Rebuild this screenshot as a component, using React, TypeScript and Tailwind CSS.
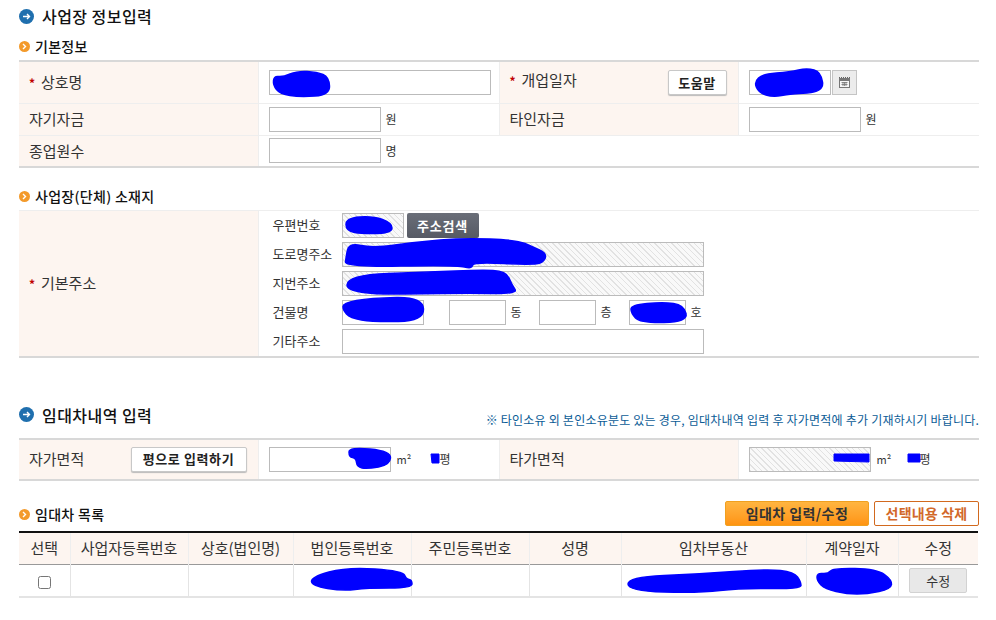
import React from "react";

const font = "font-['Noto_Sans_CJK_KR','Noto_Sans',sans-serif]";
const hatch =
  "bg-[repeating-linear-gradient(45deg,#e2e2e2_0,#e2e2e2_1px,#f9f9f9_1px,#f9f9f9_4px)]";

const scribbles: string[] = [
  "274,76 283,77 297,71 317,72 329,77 330,95 300,97 280,94 273,85",
  "754,82 763,74 790,72 807,68 821,72 824,92 790,94 773,97 759,93",
  "346,218 373,216 392,223 392,233 363,234 346,231",
  "349,243 373,248 417,242 463,238 517,240 533,247 546,253 545,261 535,265 473,262 472,269 457,265 345,267 346,257",
  "347,275 430,272 480,270 506,271 512,285 518,294 463,293 347,295",
  "343,303 370,298 423,297 424,321 373,322 350,318 343,310",
  "631,305 663,302 684,305 688,322 640,323 631,313",
  "349,447 391,451 390,465 367,469 357,467 356,458 349,457",
  "431,454 439,454 439,463 432,463",
  "834,454 869,454 869,462 834,461",
  "908,454 920,454 920,462 908,462",
  "311,577 347,567 403,571 406,579 412,580 412,588 367,588 343,591 312,586",
  "628,577 700,574 767,569 794,572 801,582 801,589 740,588 700,593 628,591",
  "817,573 828,574 833,568 877,569 892,580 891,589 867,594 847,594 825,589 817,581",
];

function smooth(points: string): string {
  const pts = points.split(" ").map((p) => p.split(",").map(Number));
  const mid = (a: number[], b: number[]) => [(a[0] + b[0]) / 2, (a[1] + b[1]) / 2];
  const start = mid(pts[pts.length - 1], pts[0]);
  let d = `M${start[0]} ${start[1]}`;
  pts.forEach((p, i) => {
    const m = mid(p, pts[(i + 1) % pts.length]);
    d += ` Q${p[0]} ${p[1]} ${m[0]} ${m[1]}`;
  });
  return d + "Z";
}

function BlueIcon() {
  return (
    <svg width="15" height="15" viewBox="0 0 15 15" className="shrink-0">
      <circle cx="7.5" cy="7.5" r="7.5" fill="#1f6fae" />
      <path d="M4 7.5h6.5M8 5l2.5 2.5L8 10" fill="none" stroke="#fff" strokeWidth="1.4" />
    </svg>
  );
}

function OrangeIcon() {
  return (
    <svg width="11" height="11" viewBox="0 0 11 11" className="shrink-0">
      <circle cx="5.5" cy="5.5" r="5.5" fill="#f39a2b" />
      <path d="M4 3l2.5 2.5L4 8" fill="none" stroke="#fff" strokeWidth="1.4" />
    </svg>
  );
}

function Heading({ children }: { children: React.ReactNode }) {
  return (
    <div className="flex items-center gap-[8px] text-[16px] font-medium text-[#111] tracking-[0.45px]">
      <BlueIcon />
      <span>{children}</span>
    </div>
  );
}

function SubHeading({ children }: { children: React.ReactNode }) {
  return (
    <div className="flex items-center gap-[5px] text-[14px] font-medium text-[#111] tracking-[0.3px]">
      <OrangeIcon />
      <span>{children}</span>
    </div>
  );
}

function Star() {
  return <span className="inline-block w-[12px] text-[12px] font-bold text-[#c00000]">*</span>;
}

function Box({ className = "" }: { className?: string }) {
  return <div className={`h-[25px] border border-[#bbbbbb] bg-white shrink-0 ${className}`} />;
}

function Unit({ children, className = "" }: { children: React.ReactNode; className?: string }) {
  return <span className={`text-[12px] text-[#333] ${className}`}>{children}</span>;
}

function WhiteButton({ children, className = "" }: { children: React.ReactNode; className?: string }) {
  return (
    <div
      className={`flex h-[25px] items-center justify-center rounded-[2px] border border-[#c8c8c8] bg-white text-[13px] font-bold text-[#222] shadow-[0_1px_1px_#bbb] tracking-[0.6px] ${className}`}
    >
      {children}
    </div>
  );
}

function AddressRow({ label, children }: { label: string; children: React.ReactNode }) {
  return (
    <div className="flex h-[25px] items-center">
      <span className="-mt-[2px] w-[69px] text-[13px] text-[#333]">{label}</span>
      {children}
    </div>
  );
}

const th = "bg-[#fdf5f0] pl-[10px] text-left text-[15px] font-normal text-[#333] border-[#eeeeee]";
const td = "pl-[10px] align-middle border-[#eeeeee]";

const listHeaders: [string, string][] = [
  ["선택", "w-[51px]"],
  ["사업자등록번호", "w-[118px]"],
  ["상호(법인명)", "w-[105px]"],
  ["법인등록번호", "w-[118px]"],
  ["주민등록번호", "w-[118px]"],
  ["성명", "w-[92px]"],
  ["임차부동산", "w-[185px]"],
  ["계약일자", "w-[92px]"],
  ["수정", "w-[80px]"],
];

function Cols() {
  return (
    <colgroup>
      <col className="w-[239px]" />
      <col className="w-[241px]" />
      <col className="w-[239px]" />
      <col className="w-[241px]" />
    </colgroup>
  );
}

export default function App() {
  return (
    <div className={`relative h-[620px] w-[996px] overflow-hidden bg-white ${font}`}>
      <div className="ml-[19px] w-[960px]">
        <div className="flex h-[32px] items-center">
          <Heading>사업장 정보입력</Heading>
        </div>
        <div className="flex h-[28px] items-center pt-[1px]">
          <SubHeading>기본정보</SubHeading>
        </div>

        <table className="w-[960px] table-fixed border-y-2 border-y-[#d8d8d8]">
          <Cols />
          <tbody>
            <tr className="h-[42px] border-b border-[#eeeeee]">
              <th className={`${th} border-r`}>
                <Star />
                상호명
              </th>
              <td className={`${td} border-r`}>
                <Box className="w-[222px]" />
              </td>
              <th className={`${th} border-r pr-[11px]`}>
                <div className="flex items-center justify-between">
                  <span className="-mt-[5px]">
                    <Star />
                    개업일자
                  </span>
                  <WhiteButton className="w-[59px]">도움말</WhiteButton>
                </div>
              </th>
              <td className={td}>
                <div className="flex gap-px">
                  <Box className="w-[82px]" />
                  <div className="flex h-[25px] w-[25px] items-center justify-center border border-[#c4c4c4] bg-[#ececec]">
                    <svg width="11" height="11" viewBox="0 0 11 11">
                      <path d="M0 .5h1M2 .5h1M4 .5h1M6 .5h1M8 .5h1M10 .5h1" stroke="#666" strokeWidth="1" />
                      <rect x="0.5" y="1.5" width="10" height="9" fill="#f6f6f6" stroke="#777" />
                      <rect x="1" y="2" width="9" height="2" fill="#777" />
                      <path d="M2.5 5.5h6M2.5 7.5h6M4 5v4M5.5 5v4M7 5v4" stroke="#777" strokeWidth="0.8" />
                    </svg>
                  </div>
                </div>
              </td>
            </tr>
            <tr className="h-[32px] border-b border-[#eeeeee]">
              <th className={`${th} border-r`}>자기자금</th>
              <td className={`${td} border-r`}>
                <div className="flex items-center gap-[5px]">
                  <Box className="w-[112px]" />
                  <Unit>원</Unit>
                </div>
              </td>
              <th className={`${th} border-r`}>타인자금</th>
              <td className={td}>
                <div className="flex items-center gap-[5px]">
                  <Box className="w-[112px]" />
                  <Unit>원</Unit>
                </div>
              </td>
            </tr>
            <tr className="h-[32px]">
              <th className={`${th} border-r`}>종업원수</th>
              <td className={td} colSpan={3}>
                <div className="flex items-center gap-[5px]">
                  <Box className="w-[112px]" />
                  <Unit>명</Unit>
                </div>
              </td>
            </tr>
          </tbody>
        </table>

        <div className="mt-[16px] flex h-[26px] items-center pb-[2px]">
          <SubHeading>사업장(단체) 소재지</SubHeading>
        </div>

        <table className="w-[960px] table-fixed border-t border-t-[#eeeeee] border-b-2 border-b-[#d8d8d8]">
          <colgroup>
            <col className="w-[239px]" />
            <col className="w-[721px]" />
          </colgroup>
          <tbody>
            <tr className="h-[146px]">
              <th className={`${th} border-r`}>
                <Star />
                기본주소
              </th>
              <td className="pl-[14px] align-middle">
                <div className="flex flex-col gap-[4px]">
                  <AddressRow label="우편번호">
                    <Box className={`w-[62px] ${hatch}`} />
                    <div className="ml-[3px] flex h-[25px] w-[72px] items-center justify-center rounded-[2px] bg-gradient-to-b from-[#6a6e78] to-[#565a64] text-[13px] font-bold tracking-[0.8px] text-white">
                      주소검색
                    </div>
                  </AddressRow>
                  <AddressRow label="도로명주소">
                    <Box className={`w-[362px] ${hatch}`} />
                  </AddressRow>
                  <AddressRow label="지번주소">
                    <Box className={`w-[362px] ${hatch}`} />
                  </AddressRow>
                  <AddressRow label="건물명">
                    <Box className="w-[82px]" />
                    <Box className="ml-[25px] w-[57px]" />
                    <Unit className="ml-[5px] w-[28px]">동</Unit>
                    <Box className="w-[57px]" />
                    <Unit className="ml-[5px] w-[28px]">층</Unit>
                    <Box className="w-[57px]" />
                    <Unit className="ml-[5px]">호</Unit>
                  </AddressRow>
                  <AddressRow label="기타주소">
                    <Box className="w-[362px]" />
                  </AddressRow>
                </div>
              </td>
            </tr>
          </tbody>
        </table>

        <div className="mt-[42px] mb-[8px] flex h-[30px] items-center justify-between">
          <Heading>임대차내역 입력</Heading>
          <span className="self-end text-[12px] leading-[20px] tracking-[0.22px] text-[#0b5c96] whitespace-nowrap">
            ※ 타인소유 외 본인소유분도 있는 경우, 임대차내역 입력 후 자가면적에 추가 기재하시기 바랍니다.
          </span>
        </div>

        <table className="w-[960px] table-fixed border-y-2 border-y-[#d8d8d8]">
          <Cols />
          <tbody>
            <tr className="h-[41px]">
              <th className={`${th} border-r pr-[11px]`}>
                <div className="flex items-center justify-between">
                  <span>자가면적</span>
                  <WhiteButton className="w-[116px]">평으로 입력하기</WhiteButton>
                </div>
              </th>
              <td className={`${td} border-r`}>
                <div className="flex items-center">
                  <Box className="w-[122px]" />
                  <span className="ml-[6px] w-[43px] text-[11px] text-[#333]">m²</span>
                  <Unit>평</Unit>
                </div>
              </td>
              <th className={`${th} border-r`}>타가면적</th>
              <td className={td}>
                <div className="flex items-center">
                  <Box className={`w-[122px] ${hatch}`} />
                  <span className="ml-[6px] w-[43px] text-[11px] text-[#333]">m²</span>
                  <Unit>평</Unit>
                </div>
              </td>
            </tr>
          </tbody>
        </table>

        <div className="mt-[20px] mb-[5px] flex h-[25px] items-center justify-between">
          <div className="pt-[3px]">
            <SubHeading>임대차 목록</SubHeading>
          </div>
          <div className="flex gap-[5px]">
            <div className="flex h-[25px] w-[144px] items-center justify-center rounded-[2px] border border-[#f0a020] bg-gradient-to-b from-[#ffb540] to-[#ff9410] text-[14px] font-bold tracking-[0.4px] text-[#333]">
              임대차 입력/수정
            </div>
            <div className="flex h-[25px] w-[105px] items-center justify-center rounded-[2px] border border-[#d2691e] bg-white text-[14px] font-bold tracking-[0.2px] text-[#d2682a]">
              선택내용 삭제
            </div>
          </div>
        </div>

        <table className="w-[959px] table-fixed border-t-2 border-t-[#111] border-b-2 border-b-[#e4e4e4]">
          <colgroup>
            {listHeaders.map(([label, w]) => (
              <col key={label} className={w} />
            ))}
          </colgroup>
          <thead>
            <tr className="h-[33px] border-b border-[#999999] bg-[#fdf5f0]">
              {listHeaders.map(([label], i) => (
                <th
                  key={label}
                  className={`text-center text-[15px] font-normal text-[#333] ${
                    i < 8 ? "border-r border-[#eeeeee]" : ""
                  }`}
                >
                  {label}
                </th>
              ))}
            </tr>
          </thead>
          <tbody>
            <tr className="h-[32px]">
              <td className="border-r border-[#e4e4e4] text-center">
                <input type="checkbox" className="h-[13px] w-[13px] align-middle" />
              </td>
              <td className="border-r border-[#e4e4e4]" />
              <td className="border-r border-[#e4e4e4]" />
              <td className="border-r border-[#e4e4e4]" />
              <td className="border-r border-[#e4e4e4]" />
              <td className="border-r border-[#e4e4e4]" />
              <td className="border-r border-[#e4e4e4]" />
              <td className="border-r border-[#e4e4e4]" />
              <td>
                <div className="mx-auto flex h-[25px] w-[58px] items-center justify-center rounded-[2px] border border-[#d2d2d2] bg-[#e8e8e8] text-[13px] text-[#333]">
                  수정
                </div>
              </td>
            </tr>
          </tbody>
        </table>
      </div>

      <svg
        className="pointer-events-none absolute left-0 top-0 h-[620px] w-[996px]"
        viewBox="0 0 996 620"
      >
        {scribbles.map((p) =>
          p.split(" ").length <= 4 ? (
            <polygon key={p} points={p} fill="#0000ff" stroke="#0000ff" strokeWidth="1" strokeLinejoin="round" />
          ) : (
            <path key={p} d={smooth(p)} fill="#0000ff" stroke="#0000ff" strokeWidth="1.5" />
          ),
        )}
      </svg>
    </div>
  );
}
